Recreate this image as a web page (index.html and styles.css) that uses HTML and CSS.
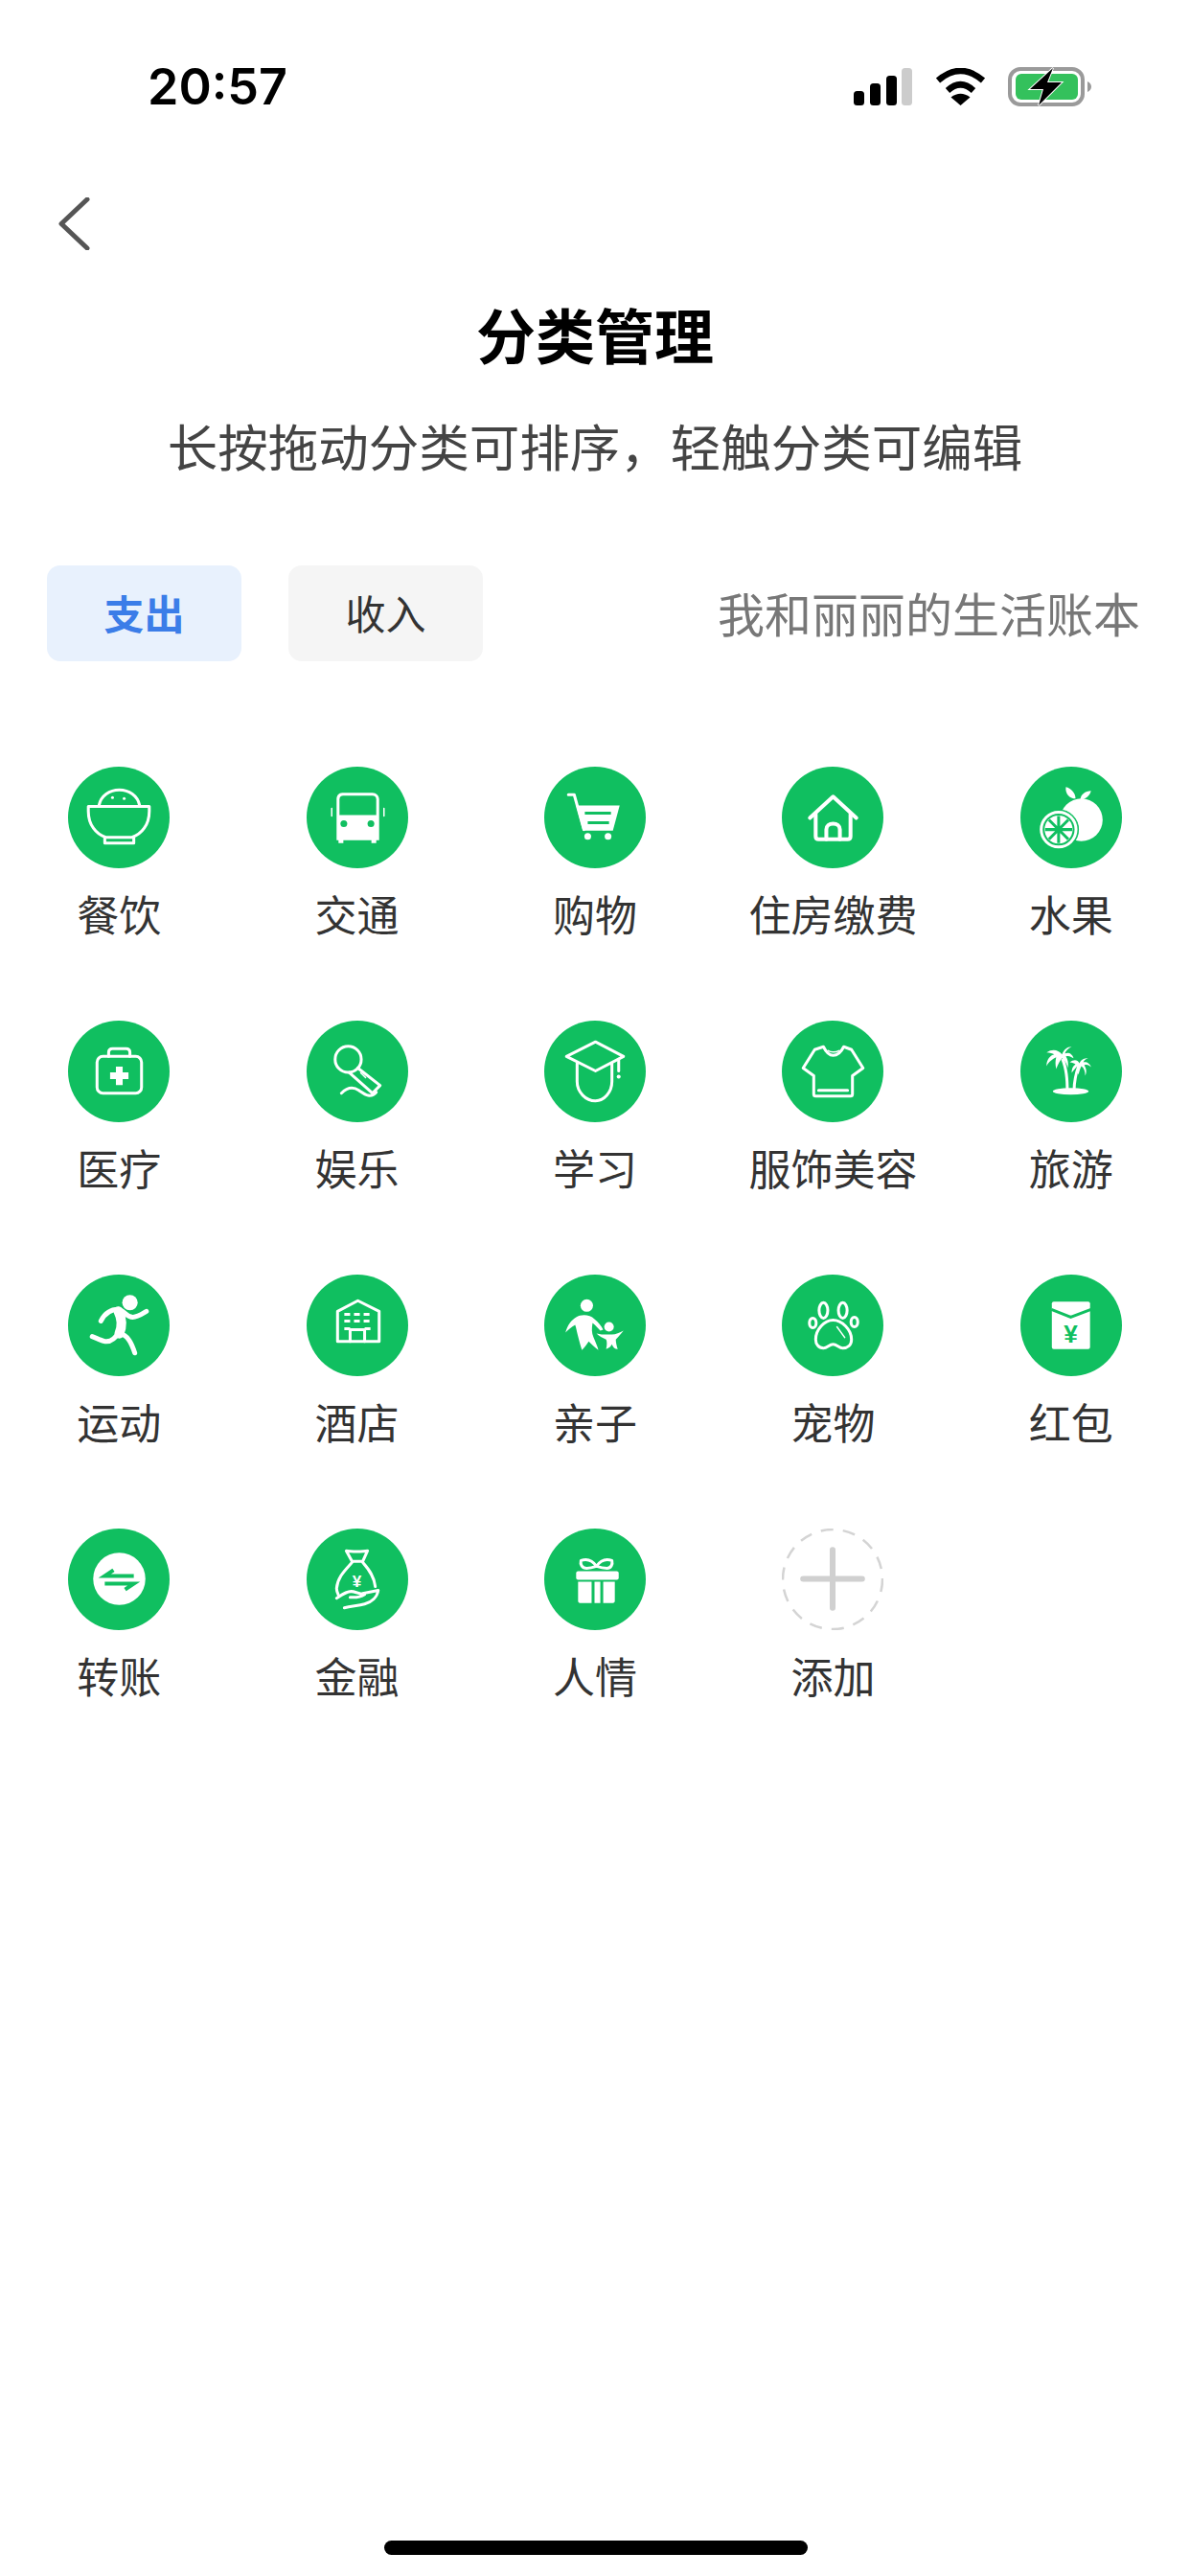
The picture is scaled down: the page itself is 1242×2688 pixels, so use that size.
FILE: index.html
```html
<!DOCTYPE html>
<html lang="zh-CN">
<head>
  <meta charset="UTF-8">
  <meta name="viewport" content="width=device-width, initial-scale=1.0">
  <title>分类管理</title>
  <link rel="stylesheet" href="styles.css">
</head>
<body>

  <div class="page">
    <!-- Status bar -->
    <div class="status-bar">
      <span class="time">20:57</span>
      <div class="status-icons">
        <svg class="signal" viewBox="0 0 61 39">
          <rect x="0" y="24" width="11" height="15" rx="3.5"/>
          <rect x="17" y="16" width="11" height="23" rx="3.5"/>
          <rect x="34" y="8" width="11" height="31" rx="3.5"/>
          <rect class="signal-off" x="50" y="0" width="11" height="39" rx="3.5"/>
        </svg>
        <svg class="wifi" viewBox="0 0 53 39">
          <path class="wifi-arc" d="M3 13Q26.500 -7 50 13"/>
          <path class="wifi-arc" d="M13 23.500Q26.500 11 40 23.500"/>
          <path d="M16.500 30.500Q26.500 23 36.500 30.500L26.500 39Z"/>
        </svg>
        <svg class="battery" viewBox="0 0 87 41">
          <rect class="battery-shell" x="2" y="2" width="76" height="37" rx="11"/>
          <rect class="battery-level" x="8" y="7" width="65" height="27" rx="6"/>
          <path class="battery-nub" d="M83 15C85.500 16 87 18 87 20.500C87 23 85.500 25 83 26Z"/>
          <path class="battery-bolt" d="M47 1L23 23H37L32 40L56 16H41Z"/>
        </svg>
      </div>
    </div>

    <svg class="back" viewBox="0 0 33 55">
      <path d="M30 2L3 27.500L30 53"/>
    </svg>

    <h1>分类管理</h1>
    <p class="hint">长按拖动分类可排序，轻触分类可编辑</p>

    <!-- Type tabs -->
    <div class="tabs">
      <button class="tab tab-active">支出</button>
      <button class="tab">收入</button>
      <span class="book-name">我和丽丽的生活账本</span>
    </div>

    <!-- Category grid -->
    <div class="category-grid">

      <div class="category">
        <svg class="icon" viewBox="0 0 105 105">
          <circle class="disc" cx="52.500" cy="52.500" r="52.500"/>
          <path class="line" d="M21 41H84V46C84 60 76 70 66 73H39C29 70 21 60 21 46Z"/>
          <path class="line" d="M38 73V79H68V73"/>
          <path class="line" d="M32 40C34 30 43 24 53 24C63 24 72 30 74 40"/>
          <circle class="solid" cx="46" cy="32" r="1.500"/>
          <circle class="solid" cx="58" cy="33" r="1.500"/>
        </svg>
        <span class="label">餐饮</span>
      </div>

      <div class="category">
        <svg class="icon" viewBox="0 0 105 105">
          <circle class="disc" cx="52.500" cy="52.500" r="52.500"/>
          <path class="solid" d="M37 27H68C72 27 75 30 75 34V76H72V79H67V76H38V79H33V76H31V34C31 30 33 27 37 27Z"/>
          <path class="cut-fill" d="M38 30H68C70.500 30 72 31.500 72 34V50H34V34C34 31.500 35.500 30 38 30Z"/>
          <circle class="cut-fill" cx="38.500" cy="59" r="3.500"/>
          <circle class="cut-fill" cx="66.500" cy="59" r="3.500"/>
          <path class="line thin" d="M26 43V51M80 43V51"/>
        </svg>
        <span class="label">交通</span>
      </div>

      <div class="category">
        <svg class="icon" viewBox="0 0 105 105">
          <circle class="disc" cx="52.500" cy="52.500" r="52.500"/>
          <path class="line" d="M25 29H31L41 65"/>
          <path class="solid" d="M33 40H78L71 66H40Z"/>
          <path class="cut" d="M42 48H69M45 58H67"/>
          <circle class="solid" cx="45" cy="72" r="3.500"/>
          <circle class="solid" cx="66" cy="72" r="3.500"/>
        </svg>
        <span class="label">购物</span>
      </div>

      <div class="category">
        <svg class="icon" viewBox="0 0 105 105">
          <circle class="disc" cx="52.500" cy="52.500" r="52.500"/>
          <path class="line thick" d="M29 53L53 31L77 53"/>
          <path class="line thick" d="M35 49V72C35 74 36 75 38 75H68C70 75 71 74 71 72V49"/>
          <path class="line thick" d="M46 75V65C46 61 49 59 53 59C57 59 60 61 60 65V75"/>
        </svg>
        <span class="label">住房缴费</span>
      </div>

      <div class="category">
        <svg class="icon" viewBox="0 0 105 105">
          <circle class="disc" cx="52.500" cy="52.500" r="52.500"/>
          <circle class="solid" cx="63" cy="55" r="22"/>
          <path class="solid" d="M47 21C52 22 57 27 57 33C51 33 46 28 47 21Z"/>
          <path class="solid" d="M73 25C72 30 67 34 62 34C62 29 67 25 73 25Z"/>
          <circle class="disc ring-gap" cx="39.500" cy="65" r="20.500"/>
          <circle class="line" cx="39.500" cy="65" r="18"/>
          <circle class="solid" cx="39.500" cy="65" r="14.500"/>
          <path class="cut thin" d="M39.500 51V79M25.500 65H53.500M29.500 55L49.500 75M49.500 55L29.500 75"/>
        </svg>
        <span class="label">水果</span>
      </div>

      <div class="category">
        <svg class="icon" viewBox="0 0 105 105">
          <circle class="disc" cx="52.500" cy="52.500" r="52.500"/>
          <rect class="line" x="30" y="37" width="46" height="38" rx="6"/>
          <path class="line" d="M42 37V33C42 30.500 43.500 29 46 29H60C62.500 29 64 30.500 64 33V37"/>
          <path class="solid" d="M49.500 47.500H56.500V53.500H62.500V60.500H56.500V66.500H49.500V60.500H43.500V53.500H49.500Z"/>
        </svg>
        <span class="label">医疗</span>
      </div>

      <div class="category">
        <svg class="icon" viewBox="0 0 105 105">
          <circle class="disc" cx="52.500" cy="52.500" r="52.500"/>
          <circle class="line" cx="43" cy="40" r="13.500"/>
          <path class="line" d="M53 49L76 67L68 75L44 53.500"/>
          <path class="line thin" d="M56 54L61 59"/>
          <path class="line" d="M36 75C42 69 48 68 54 72C60 76 66 81 72 74"/>
        </svg>
        <span class="label">娱乐</span>
      </div>

      <div class="category">
        <svg class="icon" viewBox="0 0 105 105">
          <circle class="disc" cx="52.500" cy="52.500" r="52.500"/>
          <path class="line" d="M53 22L82 37L53 52L23 37Z"/>
          <path class="line" d="M34 44V63C34 74 43 83 53 83C62 83 70 74 70 63V44"/>
          <path class="line" d="M77 40V52"/>
          <circle class="solid" cx="77" cy="58" r="2"/>
        </svg>
        <span class="label">学习</span>
      </div>

      <div class="category">
        <svg class="icon" viewBox="0 0 105 105">
          <circle class="disc" cx="52.500" cy="52.500" r="52.500"/>
          <path class="line" d="M43 27C46 33 49 36 53 36C58 36 61 33 64 27L72 30L84 49L73 57V76C73 77.500 72 78 71 78H35C34 78 33 77.500 33 76V57L22 49L34 30Z"/>
          <path class="line" d="M38 72H68"/>
          <path class="line thin" d="M48 31C50 33 56 33 59 31"/>
        </svg>
        <span class="label">服饰美容</span>
      </div>

      <div class="category">
        <svg class="icon" viewBox="0 0 105 105">
          <circle class="disc" cx="52.500" cy="52.500" r="52.500"/>
          <ellipse class="solid" cx="52" cy="73" rx="18.500" ry="3.500"/>
          <path class="solid" d="M47 72C47 60 46 50 42 40L45 39C49 50 50 60 50 72Z"/>
          <path class="solid" d="M54 72C54 64 56 54 59 46L61 47C59 55 57 64 57 72Z"/>
          <path class="solid" d="M43 35C39 30 33 29 27 33C31 33 33 34 35 35C31 36 27 40 27 47C30 42 33 40 37 38C36 42 36 45 37 50C39 45 41 41 43 39C46 41 48 45 49 49C50 44 49 40 47 37C50 36 52 37 55 39C53 33 49 33 46 34C47 31 49 29 53 27C48 27 45 30 43 35Z"/>
          <path class="solid" d="M61 44C59 40 55 40 51 43C54 43 55 44 57 45C54 47 53 50 53 54C55 51 57 49 59 47C58 50 59 53 60 56C61 52 62 49 63 47C66 49 67 53 67 57C69 53 68 49 66 46C69 45 71 46 73 48C72 44 68 42 65 43C66 41 67 40 70 39C66 39 63 40 61 44Z"/>
        </svg>
        <span class="label">旅游</span>
      </div>

      <div class="category">
        <svg class="icon" viewBox="0 0 105 105">
          <circle class="disc" cx="52.500" cy="52.500" r="52.500"/>
          <circle class="solid" cx="64" cy="29" r="8"/>
          <path class="line runner" d="M34 48C38 40 43 36 52 36C58 37 60 44 67 44C72 44 76 41 81 38"/>
          <path class="line runner-body" d="M52 38C56 46 56 54 53 61"/>
          <path class="line runner" d="M53 61C62 62 66 72 69 81"/>
          <path class="line runner" d="M53 59C49 66 44 70 38 69C34 68 30 66 25 64"/>
        </svg>
        <span class="label">运动</span>
      </div>

      <div class="category">
        <svg class="icon" viewBox="0 0 105 105">
          <circle class="disc" cx="52.500" cy="52.500" r="52.500"/>
          <path class="line" d="M32 38L53 27L75 38V69H32Z"/>
          <path class="line" d="M45 69V57H60V69"/>
          <path class="line dashes" d="M39 41H67M39 48H67M39 56H45M60 56H67"/>
        </svg>
        <span class="label">酒店</span>
      </div>

      <div class="category">
        <svg class="icon" viewBox="0 0 105 105">
          <circle class="disc" cx="52.500" cy="52.500" r="52.500"/>
          <circle class="solid" cx="44" cy="32" r="6.500"/>
          <path class="solid" d="M22 60C24 52 28 47 33 44C38 41 47 41 52 46C56 49 59 53 61 57L58 58C55 55 53 52 50 50C49 56 49 60 51 65C53 70 55 74 56 78C52 75 49 72 46 69C44 72 42 75 39 78C37 72 36 68 35 64C34 60 33 55 32 52C28 54 25 57 22 60Z"/>
          <circle class="solid" cx="67" cy="54" r="5"/>
          <path class="solid" d="M54 61C58 62 61 62 64 62H70C74 62 78 60 82 58C79 62 76 65 74 67C74 70 75 74 76 77C73 77 71 75 70 72C69 74 67 76 64 77C65 73 65 69 64 67C61 66 57 64 54 61Z"/>
        </svg>
        <span class="label">亲子</span>
      </div>

      <div class="category">
        <svg class="icon" viewBox="0 0 105 105">
          <circle class="disc" cx="52.500" cy="52.500" r="52.500"/>
          <ellipse class="line" cx="43" cy="37" rx="4.500" ry="8"/>
          <ellipse class="line" cx="63" cy="37" rx="4.500" ry="8"/>
          <ellipse class="line" cx="32" cy="50" rx="3.500" ry="5"/>
          <ellipse class="line" cx="75" cy="49" rx="3.500" ry="5"/>
          <path class="line" d="M53 47C62 47 72 57 72 67C72 73 68 76 63 76C59 76 57 72 53 72C49 72 47 76 43 76C38 76 35 72 35 67C35 57 44 47 53 47Z"/>
          <path class="line thin" d="M57 54L65 65"/>
        </svg>
        <span class="label">宠物</span>
      </div>

      <div class="category">
        <svg class="icon" viewBox="0 0 105 105">
          <circle class="disc" cx="52.500" cy="52.500" r="52.500"/>
          <rect class="solid" x="32.500" y="28" width="39.500" height="49" rx="2"/>
          <path class="cut" d="M32 36L52 44L73 36"/>
          <text class="yen" x="52" y="70">¥</text>
        </svg>
        <span class="label">红包</span>
      </div>

      <div class="category">
        <svg class="icon" viewBox="0 0 105 105">
          <circle class="disc" cx="52.500" cy="52.500" r="52.500"/>
          <circle class="solid" cx="53" cy="52" r="27"/>
          <path class="cut cut-bold" d="M68 49H38L47 43"/>
          <path class="cut cut-bold" d="M38 57H68L59 63"/>
        </svg>
        <span class="label">转账</span>
      </div>

      <div class="category">
        <svg class="icon" viewBox="0 0 105 105">
          <circle class="disc" cx="52.500" cy="52.500" r="52.500"/>
          <path class="line" d="M41 23C46 24 58 24 63 23L58 34H47Z"/>
          <path class="line" d="M47 35C40 43 32 50 31 62C31 65 32 67 33 69"/>
          <path class="line" d="M58 35C65 43 70 50 71 60"/>
          <text class="yen yen-small" x="52" y="60">¥</text>
          <path class="line" d="M31 72C37 68 41 65 46 65C50 65 55 68 60 68C54 72 48 71 45 71"/>
          <path class="line" d="M58 67L74 64C73 71 67 76 60 78C53 80 46 80 39 82"/>
        </svg>
        <span class="label">金融</span>
      </div>

      <div class="category">
        <svg class="icon" viewBox="0 0 105 105">
          <circle class="disc" cx="52.500" cy="52.500" r="52.500"/>
          <rect class="solid" x="33" y="44" width="44" height="9" rx="2"/>
          <path class="solid" d="M35 55H49V77H37C36 77 35 76 35 75ZM52 55H58V77H52ZM61 55H73V75C73 76 72 77 71 77H61Z"/>
          <path class="line" d="M54 39C50 33 44 31 38 33C37 37 39 41 44 41C47 41 51 40 54 39C57 40 61 41 65 41C69 41 71 37 70 33C64 31 58 33 54 39Z"/>
        </svg>
        <span class="label">人情</span>
      </div>

      <div class="category">
        <svg class="icon" viewBox="0 0 105 105">
          <circle class="add-ring" cx="52.500" cy="52.500" r="51.500"/>
          <path class="add-plus" d="M52.500 22V82M22 52H83"/>
        </svg>
        <span class="label">添加</span>
      </div>

    </div>

    <div class="home-indicator"></div>
  </div>

</body>
</html>
```

FILE: styles.css
```css
/* styles.css */
body {
  margin: 0;
  padding: 0;
  background-color: #fff;
  font-family: "Noto Sans CJK SC", "Noto Sans", sans-serif;
  color: #333;
}

.page {
  display: flex;
  flex-direction: column;
  height: 2688px;
  overflow: hidden;
}

/* Status bar */
.status-bar {
  display: flex;
  justify-content: space-between;
  align-items: center;
  height: 41px;
  padding: 70px 103px 0 154px;
}

.time {
  font-family: Inter, sans-serif;
  font-size: 52px;
  font-weight: 600;
  line-height: 39px;
  color: #000;
}

.status-icons {
  display: flex;
  align-items: center;
}

.signal {
  width: 61px;
  height: 39px;
  margin-right: 24px;
}

.signal-off {
  fill: #ccc;
}

.wifi {
  width: 53px;
  height: 39px;
  margin-right: 23px;
}

.wifi-arc {
  fill: none;
  stroke: #000;
  stroke-width: 6.5;
}

.battery {
  width: 87px;
  height: 41px;
}

.battery-shell {
  fill: #fff;
  stroke: #9a9a9a;
  stroke-width: 4;
}

.battery-level {
  fill: #34c15c;
}

.battery-nub {
  fill: #9a9a9a;
}

.battery-bolt {
  fill: #000;
  stroke: #fff;
  stroke-width: 2;
  paint-order: stroke;
}

/* Header */
.back {
  display: block;
  width: 33px;
  height: 55px;
  margin: 95px 0 0 61px;
  fill: none;
  stroke: #555;
  stroke-width: 5;
  stroke-linecap: round;
  stroke-linejoin: round;
}

h1 {
  margin: 52px 0 0;
  font-size: 62px;
  font-weight: 700;
  line-height: 70px;
  text-align: center;
  color: #000;
}

.hint {
  margin: 46px 0 0;
  font-size: 52.500px;
  line-height: 70px;
  text-align: center;
  color: #444;
}

/* Tabs */
.tabs {
  display: flex;
  align-items: center;
  margin-top: 91px;
  padding: 0 52px 0 49px;
}

.tab {
  width: 203px;
  height: 100px;
  margin-right: 49px;
  padding: 0 0 3px;
  border: none;
  border-radius: 14px;
  background-color: #f5f5f5;
  font-family: inherit;
  font-size: 42px;
  color: #333;
}

.tab-active {
  background-color: #e8f1fd;
  font-weight: 700;
  color: #3b7de8;
}

.book-name {
  margin-left: auto;
  padding-bottom: 3px;
  font-size: 49px;
  color: #777;
}

/* Category grid */
.category-grid {
  display: grid;
  grid-template-columns: repeat(5, 1fr);
  row-gap: 82px;
  margin-top: 110px;
}

.category {
  display: flex;
  flex-direction: column;
  align-items: center;
}

.icon {
  width: 106px;
  height: 106px;
}

.label {
  margin-top: 17px;
  font-size: 44px;
  line-height: 60px;
  white-space: nowrap;
}

.disc,
.cut-fill {
  fill: #10bf60;
}

.line {
  fill: none;
  stroke: #fff;
  stroke-width: 3;
  stroke-linecap: round;
  stroke-linejoin: round;
}

.thick {
  stroke-width: 4;
}

.thin {
  stroke-width: 1.5;
}

.solid {
  fill: #fff;
}

.cut {
  fill: none;
  stroke: #10bf60;
  stroke-width: 3;
}

.cut-bold {
  stroke-width: 4;
}

.runner {
  stroke-width: 5;
}

.runner-body {
  stroke-width: 10;
}

.dashes {
  stroke-dasharray: 6 4;
  stroke-linecap: butt;
}

.ring-gap {
  stroke: #10bf60;
}

.yen {
  fill: #10bf60;
  font-family: "Liberation Sans", sans-serif;
  font-size: 26px;
  font-weight: 700;
  text-anchor: middle;
}

.yen-small {
  fill: #fff;
  font-size: 17px;
}

.add-ring {
  fill: none;
  stroke: #d4d4d4;
  stroke-width: 2.5;
  stroke-dasharray: 13 10;
}

.add-plus {
  fill: none;
  stroke: #d0d0d0;
  stroke-width: 6;
  stroke-linecap: round;
}

/* Home indicator */
.home-indicator {
  align-self: center;
  width: 442px;
  height: 15px;
  margin-top: auto;
  margin-bottom: 22px;
  margin-left: 2px;
  border-radius: 8px;
  background-color: #000;
}
```
